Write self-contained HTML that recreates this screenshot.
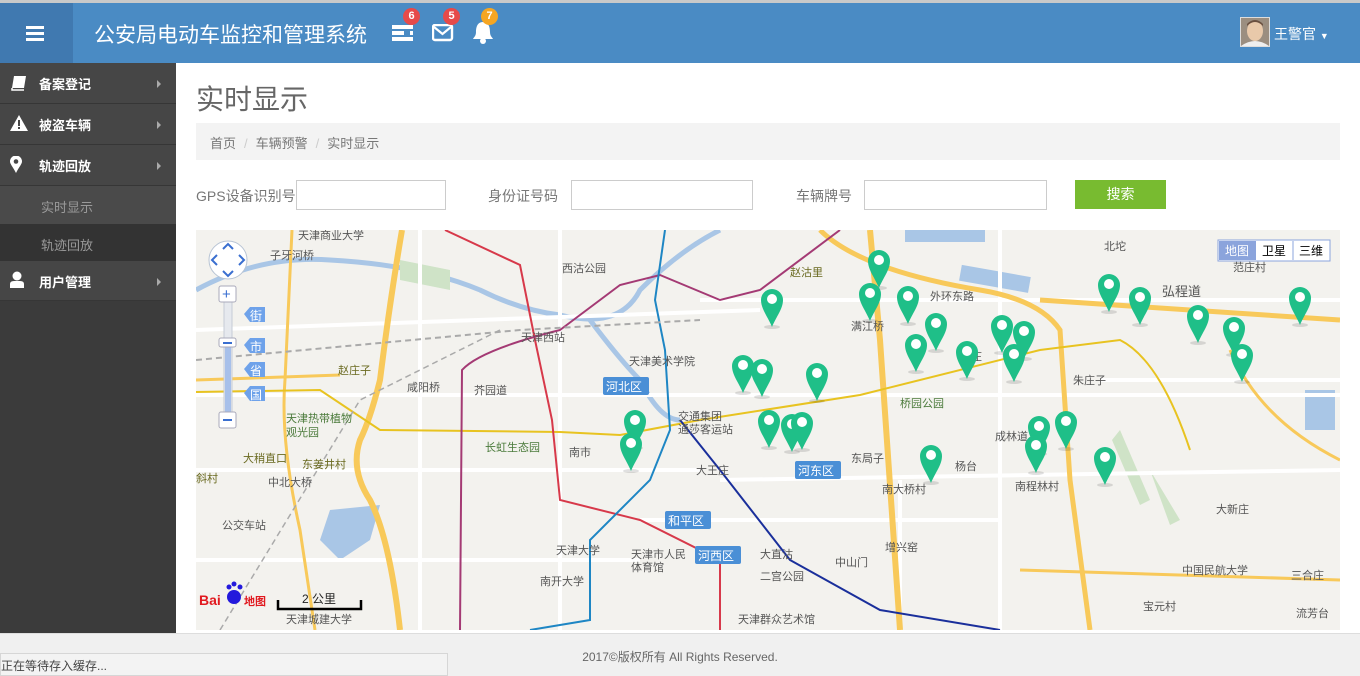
<!DOCTYPE html>
<html><head><meta charset="utf-8">
<style>
*{margin:0;padding:0;box-sizing:border-box}
body{width:1360px;height:676px;overflow:hidden;background:#fff;font-family:"Liberation Sans","Noto Sans CJK SC",sans-serif;position:relative}
.topline{position:absolute;left:0;top:0;width:1360px;height:3px;background:#c9c9c9}
.hdr{position:absolute;left:0;top:3px;width:1360px;height:60px;background:#4a8bc4}
.hdr .tog{position:absolute;left:0;top:0;width:73px;height:60px;background:#4079b0}
.hdr .tog i{position:absolute;left:26px;width:18px;height:3px;background:#fff}
.title{position:absolute;left:94px;top:16px;color:#fff;font-size:21px}
.ic{position:absolute;top:18px}
.badge{position:absolute;width:17px;height:17px;border-radius:50%;color:#fff;font-size:11px;font-weight:bold;text-align:center;line-height:17px}
.user{position:absolute;left:1240px;top:14px;width:30px;height:30px;background:#c8b8a8;border:1px solid #ddd}
.uname{position:absolute;left:1274px;top:21px;color:#fff;font-size:14px}
.side{position:absolute;left:0;top:63px;width:176px;height:570px;background:#3b3b3b}
.mi{position:absolute;left:0;width:176px;height:41px;background:#464646;border-bottom:1px solid #363636;color:#fff;font-size:13px;font-weight:bold}
.mi span{position:absolute;left:39px;top:11px}
.mi b{position:absolute;left:157px;top:17px;border-left:4px solid #aaa;border-top:4px solid transparent;border-bottom:4px solid transparent}
.sub{position:absolute;left:0;width:176px;color:#9a9a9a;font-size:13px}
.sub span{position:absolute;left:41px;top:11px}
h1{position:absolute;left:196px;top:78px;font-size:28px;font-weight:normal;color:#666}
.bc{position:absolute;left:196px;top:123px;width:1144px;height:37px;background:#f3f3f3;font-size:13px;color:#777;padding:10px 14px}
.bc em{font-style:normal;color:#ccc;margin:0 8px}
.lbl{position:absolute;top:186px;font-size:14px;color:#777}
.inp{position:absolute;top:180px;height:30px;border:1px solid #ccc;background:#fff}
.btn{position:absolute;left:1075px;top:180px;width:91px;height:29px;background:#78bb30;color:#fff;font-size:14px;text-align:center;line-height:29px}
.map{position:absolute;left:196px;top:230px;width:1144px;height:400px;overflow:hidden;background:#f3f2ee}
.foot{position:absolute;left:0;top:633px;width:1360px;height:43px;background:#f0f0f0;border-top:1px solid #ddd}
.foot p{position:absolute;left:0;width:1360px;top:14px;text-align:center;font-size:12px;color:#666}
.status{position:absolute;left:0;top:653px;width:448px;height:23px;background:#f3f3f3;border:1px solid #d6d6d6;font-size:12px;color:#444;padding:3px 0 0 0}
</style></head><body>
<div class="topline"></div>
<div class="hdr">
 <div class="tog"><i style="top:23px"></i><i style="top:29px"></i><i style="top:35px"></i></div>
 <div class="title">公安局电动车监控和管理系统</div>
 <svg class="ic" style="left:392px;top:20px" width="22" height="20"><rect x="0" y="2" width="21" height="4" fill="#fff"/><rect x="0" y="8" width="21" height="4" fill="#fff"/><rect x="0" y="14" width="21" height="4" fill="#fff"/><rect x="12" y="8" width="6" height="4" fill="#4a8bc4"/></svg>
 <div class="badge" style="left:403px;top:5px;background:#e64a4a">6</div>
 <svg class="ic" style="left:432px;top:21px" width="22" height="18"><rect x="1" y="1" width="19" height="15" rx="2" fill="none" stroke="#fff" stroke-width="2.4"/><path d="M2 3 L10.5 10 L19 3" fill="none" stroke="#fff" stroke-width="2.2"/></svg>
 <div class="badge" style="left:443px;top:5px;background:#e64a4a">5</div>
 <svg class="ic" style="left:472px;top:18px" width="22" height="23"><path d="M11 1 C5 1 4 7 4 11 C4 15 2 16 1 18 L21 18 C20 16 18 15 18 11 C18 7 17 1 11 1Z" fill="#fff"/><circle cx="11" cy="20" r="3" fill="#fff"/></svg>
 <div class="badge" style="left:481px;top:5px;background:#f5a623">7</div>
 <div class="user"><svg width="28" height="28"><rect width="28" height="28" fill="#9b8e80"/><ellipse cx="14" cy="13" rx="8" ry="10" fill="#e9c9aa"/><path d="M6 8 Q14 0 22 8 L22 6 Q14 -2 6 6Z" fill="#6a5040"/><path d="M0 28 Q14 18 28 28Z" fill="#eee"/></svg></div>
 <div class="uname">王警官 <span style="font-size:9px">▼</span></div>
</div>
<div class="side">
 <div class="mi" style="top:0"><svg style="position:absolute;left:11px;top:12px" width="16" height="16"><path d="M3 1 L15 1 L13 13 L1 13Z" fill="#fff"/><path d="M1 13 L1 15 L13 15" stroke="#fff" fill="none" stroke-width="1.5"/></svg><span>备案登记</span><b></b></div>
 <div class="mi" style="top:41px"><svg style="position:absolute;left:10px;top:11px" width="18" height="16"><path d="M9 0 L18 16 L0 16Z" fill="#fff"/><rect x="8" y="5" width="2" height="6" fill="#464646"/><rect x="8" y="12" width="2" height="2" fill="#464646"/></svg><span>被盗车辆</span><b></b></div>
 <div class="mi" style="top:82px"><svg style="position:absolute;left:10px;top:11px" width="12" height="17"><path d="M6 17 C3 11 0 8 0 5.5 A6 6 0 0 1 12 5.5 C12 8 9 11 6 17Z" fill="#fff"/><circle cx="6" cy="5.5" r="2.3" fill="#464646"/></svg><span>轨迹回放</span><b></b></div>
 <div class="sub" style="top:123px;height:38px;background:#4a4a4a"><span>实时显示</span></div>
 <div class="sub" style="top:161px;height:37px;background:#333"><span>轨迹回放</span></div>
 <div class="mi" style="top:198px;height:40px"><svg style="position:absolute;left:10px;top:10px" width="14" height="17"><circle cx="7" cy="5" r="4.5" fill="#fff"/><path d="M0 17 L0 13 Q0 10 4 10 L10 10 Q14 10 14 13 L14 17Z" fill="#fff"/></svg><span>用户管理</span><b></b></div>
</div>
<h1>实时显示</h1>
<div class="bc">首页<em>/</em>车辆预警<em>/</em>实时显示</div>
<div class="lbl" style="left:196px">GPS设备识别号</div>
<div class="inp" style="left:296px;width:150px"></div>
<div class="lbl" style="left:488px">身份证号码</div>
<div class="inp" style="left:571px;width:182px"></div>
<div class="lbl" style="left:796px">车辆牌号</div>
<div class="inp" style="left:864px;width:183px"></div>
<div class="btn">搜索</div>
<div class="map">
<svg width="1144" height="400" viewBox="196 230 1144 400" style="position:absolute;left:0;top:0" font-family="Liberation Sans,Noto Sans CJK SC,sans-serif">
 <path d="M196 290 Q260 255 330 260 Q420 265 480 290 Q520 310 560 315 Q620 330 640 290 Q680 250 720 230" fill="none" stroke="#a9c6e6" stroke-width="5"/>
 <path d="M590 320 Q620 360 640 380 Q660 420 680 420" fill="none" stroke="#a9c6e6" stroke-width="5"/>
 <path d="M330 510 L380 505 L370 540 L340 560 L320 540Z" fill="#a9c6e6"/>
 <rect x="905" y="230" width="80" height="12" fill="#a9c6e6"/>
 <rect x="960" y="270" width="70" height="16" fill="#a9c6e6" transform="rotate(10 990 278)"/>
 <rect x="1305" y="390" width="30" height="40" fill="#a9c6e6"/>
 <path d="M400 260 L450 270 L450 290 L400 280Z" fill="#cfe3c7"/>
 <path d="M1120 430 L1150 500 L1140 505 L1112 440Z" fill="#cfe3c7"/>
 <path d="M1150 470 L1180 520 L1170 525Z" fill="#cfe3c7"/>
 <g stroke="#fff" stroke-width="4" fill="none">
  <path d="M196 395 L1340 395"/><path d="M196 470 L700 470"/><path d="M196 560 L640 560"/>
  <path d="M420 230 L420 630"/><path d="M560 230 L560 630"/><path d="M700 300 L1340 300"/>
  <path d="M720 480 L1340 470"/><path d="M1000 230 L1000 630"/><path d="M196 330 L760 310"/>
  <path d="M900 480 L900 630"/><path d="M1100 380 L1340 380"/><path d="M640 520 L1000 520"/>
 </g>
 <g stroke="#f8c95a" fill="none">
  <path d="M402 230 Q390 300 380 380 Q370 420 360 440 Q350 470 370 500 Q390 540 400 630" stroke-width="6"/>
  <path d="M292 230 L285 380 Q280 440 300 530 L315 630" stroke-width="3"/>
  <path d="M870 230 L880 340 L900 630" stroke-width="6"/>
  <path d="M820 230 Q860 270 980 290 Q1040 300 1060 330 L1070 480 L1090 630" stroke-width="5"/>
  <path d="M1040 300 L1340 320" stroke-width="5"/>
  <path d="M1230 350 Q1260 420 1340 460" stroke-width="3"/>
  <path d="M1020 570 L1340 580" stroke-width="3"/>
  <path d="M196 380 L340 375" stroke-width="3"/>
 </g>
 <path d="M196 392 L320 390 L380 430 L560 432 L620 435 L700 420 L860 395 L1040 350 L1120 340 Q1160 360 1190 450" fill="none" stroke="#e8c320" stroke-width="2"/>
 <path d="M445 230 L520 265 L535 340 L552 420 L560 500 L640 520 L720 560 L720 630" fill="none" stroke="#d7394a" stroke-width="2"/>
 <path d="M460 630 L462 370 Q480 350 560 330 L620 285 L660 275 L720 300 L760 290 L840 230" fill="none" stroke="#a43a74" stroke-width="2"/>
 <path d="M530 630 L590 620 L590 540 L650 480 L670 430 L665 350 L655 300 L665 230" fill="none" stroke="#1e86c4" stroke-width="2"/>
 <path d="M680 420 L720 470 L790 560 L880 610 L1000 630" fill="none" stroke="#1a2f9b" stroke-width="2"/>
 <path d="M196 360 L520 330 L700 320" fill="none" stroke="#aaa" stroke-width="2" stroke-dasharray="6 4"/>
 <path d="M220 630 L360 400 L500 330" fill="none" stroke="#aaa" stroke-width="1.5" stroke-dasharray="6 4"/>
 <g font-size="11" fill="#555">
  <text x="298" y="239">天津商业大学</text><text x="270" y="259">子牙河桥</text><text x="562" y="272">西沽公园</text>
  <text x="521" y="341">天津西站</text><text x="629" y="365">天津美术学院</text><text x="407" y="391">咸阳桥</text>
  <text x="474" y="394">芥园道</text><text x="286" y="422" fill="#4a7a3a">天津热带植物</text><text x="286" y="436" fill="#4a7a3a">观光园</text>
  <text x="485" y="451" fill="#4a7a3a">长虹生态园</text><text x="569" y="456">南市</text><text x="268" y="486">中北大桥</text>
  <text x="222" y="529">公交车站</text><text x="556" y="554">天津大学</text><text x="631" y="558">天津市人民</text><text x="631" y="571">体育馆</text>
  <text x="540" y="585">南开大学</text><text x="286" y="623">天津城建大学</text><text x="696" y="474">大王庄</text>
  <text x="760" y="558">大直沽</text><text x="678" y="420">交通集团</text><text x="678" y="433">通莎客运站</text>
  <text x="790" y="276" fill="#6a6a20">赵沽里</text><text x="851" y="330">满江桥</text><text x="900" y="407" fill="#4a7a3a">桥园公园</text>
  <text x="851" y="462">东局子</text><text x="955" y="470">杨台</text><text x="995" y="440">成林道</text><text x="1015" y="490">南程林村</text>
  <text x="1073" y="384">朱庄子</text><text x="1162" y="296" font-size="13">弘程道</text><text x="1104" y="250">北坨</text>
  <text x="1233" y="271">范庄村</text><text x="1216" y="513">大新庄</text><text x="1182" y="574">中国民航大学</text><text x="1291" y="579">三合庄</text>
  <text x="1143" y="610">宝元村</text><text x="1296" y="617">流芳台</text><text x="885" y="551">增兴窑</text><text x="835" y="566">中山门</text>
  <text x="760" y="580">二宫公园</text><text x="738" y="623">天津群众艺术馆</text><text x="338" y="374" fill="#6a6a20">赵庄子</text>
  <text x="243" y="462" fill="#6a6a20">大稍直口</text><text x="302" y="468" fill="#6a6a20">东姜井村</text><text x="196" y="482" fill="#6a6a20">斜村</text>
  <text x="882" y="493">南大桥村</text><text x="930" y="300">外环东路</text><text x="960" y="360">明庄</text>
 </g>
 <g font-size="12" fill="#fff">
  <rect x="603" y="377" width="46" height="18" rx="2" fill="#4a8fd6"/><text x="606" y="391">河北区</text>
  <rect x="795" y="461" width="46" height="18" rx="2" fill="#4a8fd6"/><text x="798" y="475">河东区</text>
  <rect x="665" y="511" width="46" height="18" rx="2" fill="#4a8fd6"/><text x="668" y="525">和平区</text>
  <rect x="695" y="546" width="46" height="18" rx="2" fill="#4a8fd6"/><text x="698" y="560">河西区</text>
 </g>
 <circle cx="228" cy="260" r="19" fill="#fff" stroke="#b8c4d4"/>
 <g stroke="#3a6fd0" stroke-width="2" fill="none"><path d="M223 249 L228 244 L233 249"/><path d="M223 271 L228 276 L233 271"/><path d="M217 255 L212 260 L217 265"/><path d="M239 255 L244 260 L239 265"/></g>
 <rect x="224" y="300" width="8" height="120" fill="#e6e9ee" stroke="#c6ccd6"/>
 <rect x="225" y="345" width="6" height="75" fill="#a7c0ea"/>
 <rect x="219" y="286" width="17" height="16" rx="2" fill="#fff" stroke="#aab"/><text x="222" y="299" font-size="15" fill="#3a6fd0">+</text>
 <rect x="219" y="338" width="17" height="9" rx="2" fill="#fff" stroke="#aab"/><rect x="223" y="342" width="9" height="2" fill="#3a6fd0"/>
 <rect x="219" y="412" width="17" height="16" rx="2" fill="#fff" stroke="#aab"/><rect x="223" y="419" width="9" height="2" fill="#3a6fd0"/>
 <g font-size="12" fill="#fff">
  <path d="M244 314 L250 307 L265 307 L265 322 L250 322Z" fill="#6ea2ea"/><text x="250" y="320">街</text>
  <path d="M244 345 L250 338 L265 338 L265 353 L250 353Z" fill="#6ea2ea"/><text x="250" y="351">市</text>
  <path d="M244 369 L250 362 L265 362 L265 377 L250 377Z" fill="#6ea2ea"/><text x="250" y="375">省</text>
  <path d="M244 393 L250 386 L265 386 L265 401 L250 401Z" fill="#6ea2ea"/><text x="250" y="399">国</text>
 </g>
 <rect x="1218" y="240" width="112" height="21" fill="#fff" stroke="#8ba4dc"/>
 <rect x="1219" y="241" width="37" height="19" fill="#8ba4dc"/>
 <line x1="1293" y1="241" x2="1293" y2="260" stroke="#8ba4dc"/>
 <g font-size="12"><text x="1225" y="255" fill="#fff">地图</text><text x="1262" y="255" fill="#000">卫星</text><text x="1299" y="255" fill="#000">三维</text></g>
 <text x="199" y="605" font-size="14" font-weight="bold" fill="#e1191f">Bai</text>
 <circle cx="234" cy="597" r="7" fill="#2319dc"/><circle cx="229" cy="587" r="2.5" fill="#2319dc"/><circle cx="234" cy="584" r="2.5" fill="#2319dc"/><circle cx="240" cy="587" r="2.5" fill="#2319dc"/>
 <text x="244" y="605" font-size="11" font-weight="bold" fill="#e1191f">地图</text>
 <path d="M278 600 L278 609 L361 609 L361 600" fill="none" stroke="#000" stroke-width="2.5"/>
 <text x="302" y="603" font-size="12" fill="#222">2 公里</text>
 <defs><g id="p"><ellipse cx="0" cy="27" rx="8" ry="2" fill="#000" opacity=".12"/><path d="M0 27 C-4 17 -11 9 -11 0 A11 11 0 1 1 11 0 C11 9 4 17 0 27Z" fill="#1fbf88"/><circle cx="0" cy="-1" r="5" fill="#fff"/></g></defs>
 <g>
  <use href="#p" x="879" y="261"/><use href="#p" x="772" y="300"/><use href="#p" x="870" y="294"/><use href="#p" x="908" y="297"/>
  <use href="#p" x="936" y="324"/><use href="#p" x="916" y="345"/><use href="#p" x="967" y="352"/><use href="#p" x="1002" y="326"/>
  <use href="#p" x="1024" y="332"/><use href="#p" x="1014" y="355"/><use href="#p" x="1109" y="285"/><use href="#p" x="1140" y="298"/>
  <use href="#p" x="1198" y="316"/><use href="#p" x="1234" y="328"/><use href="#p" x="1242" y="355"/><use href="#p" x="1300" y="298"/>
  <use href="#p" x="743" y="366"/><use href="#p" x="762" y="370"/><use href="#p" x="817" y="374"/><use href="#p" x="635" y="421"/>
  <use href="#p" x="631" y="444"/><use href="#p" x="769" y="421"/><use href="#p" x="792" y="425"/><use href="#p" x="802" y="423"/>
  <use href="#p" x="931" y="456"/><use href="#p" x="1039" y="427"/><use href="#p" x="1036" y="446"/><use href="#p" x="1066" y="422"/>
  <use href="#p" x="1105" y="458"/>
 </g>
</svg>
</div>
<div class="foot"><p>2017©版权所有 All Rights Reserved.</p></div>
<div class="status">正在等待存入缓存...</div>
</body></html>
